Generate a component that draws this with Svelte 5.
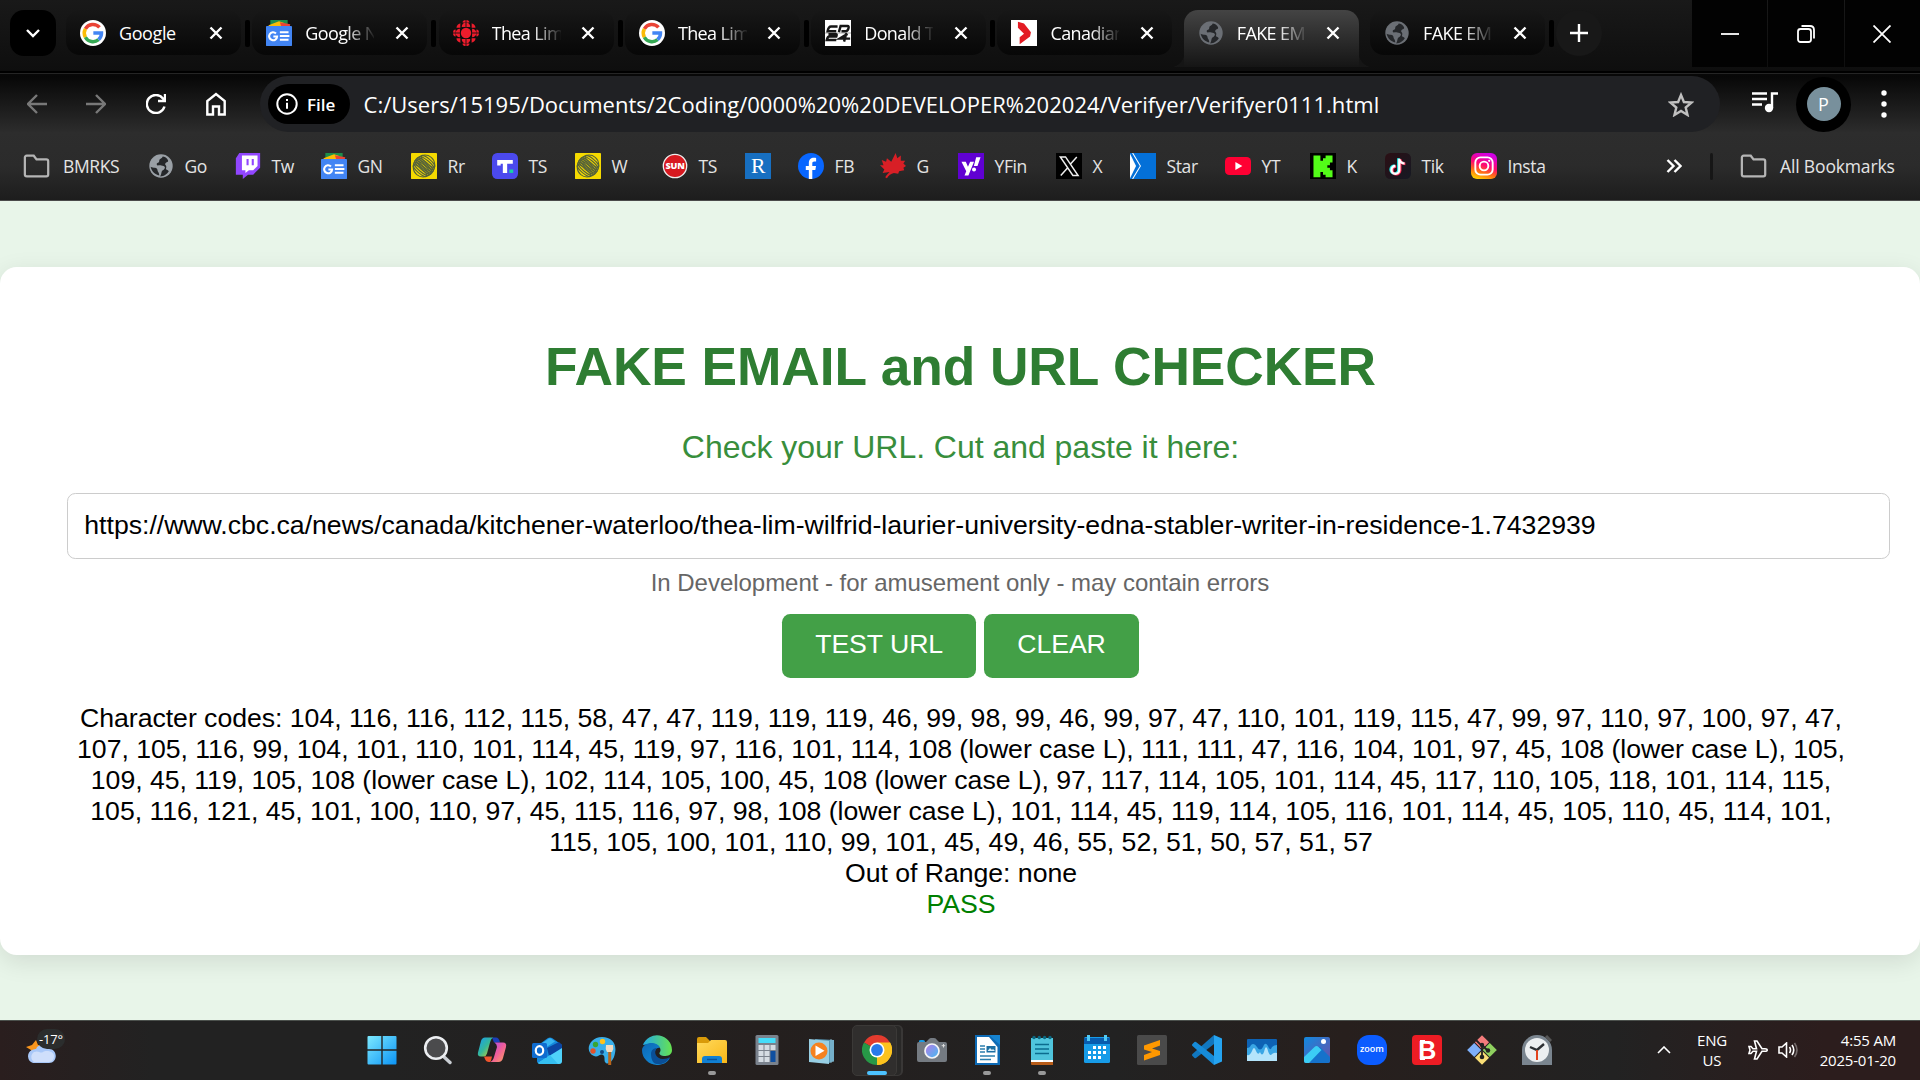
<script>
  const googleG = '<circle cx="15" cy="15" r="15" fill="#fff"/><path d="M22.5 8.6A10 10 0 0 0 6.2 10.2" fill="none" stroke="#ea4335" stroke-width="4"/><path d="M6.2 10.2A10 10 0 0 0 6.2 19.9" fill="none" stroke="#fbbc05" stroke-width="4"/><path d="M6.2 19.9A10 10 0 0 0 21.4 22.7" fill="none" stroke="#34a853" stroke-width="4"/><path d="M21.4 22.7A10 10 0 0 0 24.8 15H15.4" fill="none" stroke="#4285f4" stroke-width="4"/>';
  const gnews = '<path d="M5 0h20v9H5z" fill="#1e8e4a"/><path d="M3 6 15 1.500l6 2V8H3z" fill="#fbbc05"/><path d="M16 2.500l12 2.500-1 4H18z" fill="#ea4335"/><rect y="7" width="30" height="23" rx="1" fill="#4285f4"/><path d="M11.500 15.600A4.600 4.600 0 1 0 12.800 19H8.500" fill="none" stroke="#fff" stroke-width="2.400"/><path d="M16 14.200h10M16 18.500h11M16 22.800h10" stroke="#fff" stroke-width="2.400"/>';
  const globe = (c) => `<circle cx="15" cy="15" r="13.5" fill="${c}"/><path d="M17 4c-1 3-4 2-4 5s-3 2-3 4 5 1 8 2 1 4-1 5-1 4-3 7c5 0 8-3 10-6-1-2-4-1-3-4s-2-3-1-5 4-1 3-4c-2-3-4-4-6-4zM3 16c3 2 8 0 8 4 0 2 2 2 2 6-5-1-9-5-10-10z" fill="#25272a"/>`;
  const rogers = '<rect width="30" height="30" rx="1" fill="#f5da00"/><g fill="none" stroke="#56633a" stroke-width="1.250"><g transform="rotate(-50 15 15)"><ellipse cx="15" cy="15" rx="13" ry="12"/><ellipse cx="13" cy="15" rx="3" ry="12"/><ellipse cx="15" cy="15" rx="3" ry="12"/><ellipse cx="17" cy="15" rx="3" ry="12"/><ellipse cx="19.500" cy="15" rx="3" ry="11"/><ellipse cx="22" cy="15" rx="3" ry="10"/><ellipse cx="10.500" cy="15" rx="3" ry="11"/><ellipse cx="8" cy="15" rx="3" ry="10"/></g></g>';
  const icons = {
    google: googleG,
    gnews,
    globe: globe('#9aa0a6'),
    globeDim: globe('#6b6f75'),
    rogers,
    cbc: '<g fill="#ed1c2c"><path d="M10 8a5 5 0 0 1 10 0zM10 22a5 5 0 0 0 10 0zM8 10a5 5 0 0 0 0 10zM22 10a5 5 0 0 1 0 10z"/><path d="M11 3a4 3 0 0 1 8 0zM11 27a4 3 0 0 0 8 0zM3 11a3 4 0 0 0 0 8zM27 11a3 4 0 0 1 0 8z"/><path d="M4 9a5 5 0 0 1 5-5v5zM26 9a5 5 0 0 0-5-5v5zM4 21a5 5 0 0 0 5 5v-5zM26 21a5 5 0 0 1-5 5v-5z"/></g><path d="M15 0v30M0 15h30M9 4v22M21 4v22" stroke="#111" stroke-width="1"/><circle cx="15" cy="15" r="6" fill="#ed1c2c"/>',
    cp24: '<rect width="30" height="30" fill="#fff"/><path d="M0 15h30" stroke="#999" stroke-width="1"/><g fill="none" stroke="#161616" stroke-width="2.800"><path d="M14.500 7.500H7q-3 0-4 5.500h10M16 14l2-7h8q2 0 1 3t-3 3h-5M4 16.500h9q1 0 0 2.500H5q-2 0-3 4h11M26 16l-9 5.500H29M24.500 15.500 22 25"/></g>',
    ctv: '<rect width="30" height="30" fill="#fff"/><path d="M8 2l7 2 8 10-1 5L10 28V20l5-4L8 9z" fill="#e31b23"/>',
    folder: '<path d="M2 8V24q0 2 2 2H25q2 0 2-2V10q0-2-2-2H14.500L11.500 4H4Q2 4 2 6z" fill="none" stroke="#b5b5b5" stroke-width="2.400"/>',
    twitch: '<path d="M5 0H29V17l-8 8h-6l-6 5v-5H1V6z" fill="#9146ff"/><path d="M8 3H26V15l-5 5h-5l-4 3v-3H8z" fill="#fff"/><path d="M14.500 7v7M20.500 7v7" stroke="#9146ff" stroke-width="2.400"/>',
    ts: '<rect width="30" height="30" rx="6" fill="#4b49ee"/><path d="M6 8H24v4.500H17.500v10.500H12.500V12.500H10v2H6z" fill="#fff"/><rect x="20" y="19" width="4.500" height="4" fill="#18d1a5"/>',
    sun: '<circle cx="15" cy="15" r="13.500" fill="#d71920" stroke="#eee" stroke-width="1.500"/><text x="15" y="18.800" font-family="Open Sans, sans-serif" font-size="10.500" font-weight="800" text-anchor="middle" letter-spacing="-.3" fill="#fff">SUN</text>',
    r: '<rect width="30" height="30" fill="#176fc1"/><text x="15" y="23.500" font-family="Liberation Serif, serif" font-size="25" text-anchor="middle" fill="#fff">R</text>',
    fb: '<circle cx="15" cy="15" r="15" fill="#0866ff"/><path d="M12.500 30V19.500H9V15h3.500v-2.800C12.500 7 15 5.500 18.300 5.500c1 0 2 .2 2.600.3v3.900h-2c-2 0-2.400 1-2.400 2.500V15h4.300l-.8 4.500h-3.500V30z" fill="#fff"/>',
    leaf: '<path d="M18 0l2 6 4-3v6l5 0-2 3 3 3-3 2 1 3-6 1-1 3-5-1q-5 1-8 6l-2-1q2-3 5-6l-8 1 2-4-5-5 4 0-2-6 5 2 1-4 5 4z" fill="#d81f26"/>',
    yahoo: '<rect width="30" height="30" fill="#6001d2"/><path d="M4 10h5l2.500 6 2.500-6h4.500L12 26H7.500l2-4.800zM21 5h5l-3.500 10h-4.200z" fill="#fff"/><circle cx="18.500" cy="19" r="2.300" fill="#fff"/>',
    x: '<rect width="30" height="30" fill="#000"/><path d="M5 4.500h6L25.500 26h-6zM24 4.500 16.500 13M13 17.500 5.500 26" fill="none" stroke="#eee" stroke-width="1.700"/>',
    star: '<rect width="30" height="30" fill="#0470d8"/><path d="M0 1l7 14-7 14z" fill="#fff"/><path d="M3 0l9 15-9 15" fill="none" stroke="#fff" stroke-width="1.200"/>',
    yt: '<rect y="4.500" width="30" height="21" rx="5" fill="#ff0033"/><path d="M12 10.500v9l8-4.500z" fill="#fff"/>',
    kick: '<rect width="30" height="30" fill="#000"/><path d="M4 3h8v6h3V6h3V3h8v8h-3v3h-3v3h3v3h3v8h-8v-3h-3v-3h-3v6H4z" fill="#53fc18"/>',
    tiktok: '<defs><linearGradient id="tk" y2="1"><stop stop-color="#2b0f14"/><stop offset="1" stop-color="#151923"/></linearGradient></defs><rect width="30" height="30" rx="6" fill="url(#tk)"/><g fill="none" stroke-width="3"><path d="M15.500 6v13a4.500 4.500 0 1 1-4.500-4.500M15.500 7c1 3 3 4.500 6 4.500" stroke="#25f4ee"/><path d="M17.500 7v13a4.500 4.500 0 1 1-4.500-4.500M17.500 8c1 3 3 4.500 6 4.500" stroke="#fe2c55"/><path d="M16.500 6.500v13a4.500 4.500 0 1 1-4.500-4.500M16.500 7.500c1 3 3 4.500 6 4.500" stroke="#fff" stroke-width="2.600"/></g>',
    insta: '<defs><linearGradient id="ig" x1=".25" y1="1" x2=".6" y2="0"><stop stop-color="#ffd000"/><stop offset=".3" stop-color="#ff6a18"/><stop offset=".55" stop-color="#ff0a70"/><stop offset="1" stop-color="#d000e8"/></linearGradient></defs><rect width="30" height="30" rx="7" fill="url(#ig)"/><rect x="5" y="5" width="20" height="20" rx="6" fill="none" stroke="#fff" stroke-width="2.200"/><circle cx="15" cy="15" r="5" fill="none" stroke="#fff" stroke-width="2.200"/><circle cx="21" cy="9" r="1.300" fill="#fff"/>',

    win: '<defs><linearGradient id="wn" x2="1" y2="1"><stop stop-color="#7deaff"/><stop offset="1" stop-color="#0b93f5"/></linearGradient></defs><path d="M.5 2q0-1 1-1H14.300V14.300H.500zM15.700 1H28.500q1 0 1 1V14.300H15.700zM.500 15.700H14.300V29.500H1.500q-1 0-1-1zM15.700 15.700H29.500V28.500q0 1-1 1H15.700z" fill="url(#wn)"/>',
    search: '<path d="M21 21l7 6.500" stroke="#c9cdd3" stroke-width="3.400" stroke-linecap="round"/><circle cx="14" cy="13" r="10.800" fill="#4b4b4d" stroke="#eceef1" stroke-width="2.600"/>',
    copilot: '<defs><linearGradient id="cp1" y2="1"><stop stop-color="#169cf5"/><stop offset=".5" stop-color="#35b79a"/><stop offset="1" stop-color="#e9d31c"/></linearGradient><linearGradient id="cp2" y2="1"><stop stop-color="#a64cf0"/><stop offset=".5" stop-color="#ef5d9b"/><stop offset="1" stop-color="#ffa35c"/></linearGradient></defs><path d="M15 2.500h4q3 0 4 5h-6z" fill="#1b3fb9"/><path d="M8 2.500h8q-2 1-3 5l-3 11q-1 3-3 3H4q-4 0-3-4L4 6q1-3.500 4-3.500z" fill="url(#cp1)"/><path d="M17.500 7.500H26q4 0 3 4.500l-3 11q-1 4-4.500 4H13q3-1 4-5l3-10q0-3-2.500-4.500z" fill="url(#cp2)"/><path d="M7 21.500h8q-1 5-2 5.500h-1q-3 0-4-3z" fill="#f0552e"/>',
    outlook: '<path d="M5 11 16 3q2-1 4 0l10 7v15q0 4-4 4H9q-4 0-4-3z" fill="#1489dc"/><path d="M6 11 17 3.500q1-.500 2 0l4 3L10 15z" fill="#37b5f2"/><path d="M15 13 27 7l3 3v4L17 21z" fill="#0b45a3"/><path d="M30 13v13q0 3-3 3H9q-2 0-3-1z" fill="#4fd2fa"/><path d="M6 28l9-6 3-2 8 9H9q-2 0-3-1z" fill="#35bff1"/><rect y="8" width="15" height="15" rx="1.500" fill="#0f6cd0"/><ellipse cx="7.500" cy="15.500" rx="3.700" ry="4.300" fill="none" stroke="#fff" stroke-width="2.200"/>',
    paint: '<path d="M15 2C25 2 30 9 28 18c-1 8-7 12-9 10-3-2 0-6-3-8s-5 3-9 1C-3 17 2 2 15 2z" fill="#38aee9"/><circle cx="6" cy="16" r="2.700" fill="#e0512b"/><circle cx="8.500" cy="9.500" r="2.700" fill="#38a535"/><circle cx="15.500" cy="6.500" r="2.700" fill="#ffc21a"/><circle cx="15" cy="17" r="2" fill="#124a83"/><path d="M21.200 16h3v14h-3z" fill="#b9651b"/><path d="M19 10h7q1 4-1 7h-5q-2-3-1-7z" fill="#f1dcc2"/>',
    edge: '<defs><linearGradient id="ed1" x2="1"><stop stop-color="#22a9e8"/><stop offset="1" stop-color="#67e34f"/></linearGradient><linearGradient id="ed2" y2="1"><stop stop-color="#0c67b5"/><stop offset="1" stop-color="#1593df"/></linearGradient></defs><path d="M1 10A15 15 0 0 1 30 15c0 5-4 6-8 6-3 0-6-2-4-4 2-4-2-8-8-8-4 0-7 1-9 1z" fill="url(#ed1)"/><path d="M0 15C1 6 16 6 18 13c-4-1-7 4-4 9s9 5 14 1c-3 5-8 7-13 7A15 15 0 0 1 0 15z" fill="url(#ed2)"/><path d="M9 19c0-4 3-6 6-6-4 4-1 11 6 11 3 0 5-1 7-2-3 6-9 8-13 7-4 0-6-5-6-10z" fill="#0a4f97"/>',
    files: '<defs><linearGradient id="fl" y2="1"><stop stop-color="#ffd95c"/><stop offset="1" stop-color="#f9b717"/></linearGradient></defs><path d="M0 8V4q0-2 2-2h7l4 4v6H0z" fill="#d99a09"/><path d="M0 8H11l3-3H28q2 0 2 2V28H0z" fill="url(#fl)"/><path d="M5 28V24q0-3 3-3H22q3 0 3 3v4z" fill="#1180d3"/><path d="M10 24.500H20" stroke="#08539c" stroke-width="1.400"/>',
    calc: '<rect x="3.500" width="23" height="30" rx="1.500" fill="#7a828d"/><rect x="6.500" y="3" width="17" height="5" fill="#45ddfa"/><g fill="#d5dce3"><path d="M6.500 10h5v5h-5zM12.500 10h5v5h-5zM18.500 10h5v5h-5zM6.500 16h5v5h-5zM12.500 16h5v5h-5zM6.500 22h5v5h-5zM12.500 22h5v5h-5z"/></g><path d="M18.500 16h5v11h-5z" fill="#0f4fa0"/>',
    media: '<path d="M8 4l19 1v21l-5 2-8-1z" fill="#5a9ab8"/><path d="M24 4v24M26 5v22" stroke="#9ed2e6" stroke-width=".8"/><path d="M2 4l20 2v23L2 27z" fill="#98cfe4"/><circle cx="12" cy="16" r="8.500" fill="#f58220"/><path d="M8.500 10.500v10.500l9-5.250z" fill="#fff"/>',
    chrome: '<path d="M15 15 2 7.500A15 15 0 0 1 28 7.500z" fill="#e33b2e"/><path d="M15 15 28 7.500A15 15 0 0 1 15 30z" fill="#fcc31e"/><path d="M15 15 15 30A15 15 0 0 1 2 7.500z" fill="#279847"/><path d="M15 7.500H28A15 15 0 0 1 15 30l6.500-11z" fill="#fcc31e"/><circle cx="15" cy="15" r="7.500" fill="#fff"/><circle cx="15" cy="15" r="5.900" fill="#2979ea"/>',
    camera: '<defs><linearGradient id="cm" x2="1" y2="1"><stop stop-color="#ba79e8"/><stop offset="1" stop-color="#3fbdf0"/></linearGradient></defs><path d="M2 8V6q0-1 2-1h2q2 0 2 2v2z" fill="#199be4"/><path d="M0 9q0-2 2-2h7l3-3q1-1 2-1h3q2 0 3 2l2 2h6q2 0 2 2v16q0 2-2 2H2q-2 0-2-2z" fill="#757b82"/><circle cx="15" cy="16" r="7" fill="url(#cm)" stroke="#f4f4f6" stroke-width="1.700"/><path d="M26.500 9v3.500M24.700 10.700h3.500" stroke="#ddd" stroke-width="1"/>',
    writer: '<path d="M3 0H20l8 8V30H3z" fill="#0d6ab5"/><path d="M5 2H17L25.500 12V28H5z" fill="#fff"/><path d="M17 0H28V10z" fill="#1683d0"/><path d="M8 11h5M8 14h5M8 17h5M8 21h15M8 24.500h11" stroke="#2b7fae" stroke-width="1.500"/><path d="M14.500 11h9v6.500h-9z" fill="#1c6fa3"/><path d="M15.500 16l2.500-3 2 2 1-1 2 2z" fill="#d9edf8"/>',
    notepad: '<path d="M4 26H26v4H5q-1 0-1-1z" fill="#b85c18"/><path d="M4 25H26v2H4z" fill="#fff"/><path d="M4 3H26V25H4z" fill="#4fc4dc"/><path d="M8 9.500H22M8 14H22M8 18.500H22" stroke="#0b6c8e" stroke-width="1.700"/><g fill="#0b667f"><circle cx="7" cy="2.500" r="1.700"/><circle cx="12.300" cy="2.500" r="1.700"/><circle cx="17.600" cy="2.500" r="1.700"/><circle cx="23" cy="2.500" r="1.700"/></g>',
    calendar: '<rect x="2" y="2" width="26" height="26" rx="1.500" fill="#179ce8"/><path d="M2 3h26v6H2z" fill="#075cae"/><path d="M5 0h3v6H5zM22 0h3v6h-3z" fill="#50c9f4"/><g fill="#fff"><path d="M11 11h3v3h-3zM16 11h3v3h-3zM21 11h3v3h-3zM6 16h3v3H6zM11 16h3v3h-3zM16 16h3v3h-3zM21 16h3v3h-3zM6 21h3v3H6zM11 21h3v3h-3zM16 21h3v3h-3z"/></g>',
    sublime: '<rect width="30" height="30" rx="1.500" fill="#4a4a4a"/><path d="M7 10.500 23 5v5.500L15 13.500 23 16v4L7 25.500V20l8-3-8-2.500z" fill="#ff9800"/>',
    vscode: '<path d="M22 0l8 3.500V26.500L22 30z" fill="#25a4f1"/><path d="M22 0v9L4 23q-1 .500-1.500 0L.500 21q-1-1 0-2z" fill="#1177bf"/><path d="M22 30v-9L4 7q-1-.500-1.500 0L.500 9q-1 1 0 2z" fill="#168bd8"/>',
    perf: '<rect y="4" width="30" height="22" rx="1" fill="#0d62b4"/><path d="M0 13q3 0 4-3 3-3 6 2t6 0q2-6 5-1 2 6 4 1 2-2 5-2V26H0z" fill="#3aa6e5"/><path d="M0 20q3 1 5-4 2-6 4 0 2 5 4 1 2 5 4 0 2-9 4-1 2 6 4 3 3-2 5-1V26H0z" fill="#b4e4fb"/>',
    photos: '<defs><linearGradient id="ph" x2="1" y2="1"><stop stop-color="#118ae0"/><stop offset="1" stop-color="#6c4fa8"/></linearGradient></defs><rect x="2" y="2" width="26" height="26" rx="2" fill="url(#ph)"/><path d="M8 28 15 13q2-2 4 0l9 9v4q0 2-2 2z" fill="#1572cb"/><path d="M2 22 12.500 12q2-2 4 0l3 3L7 28H4q-2 0-2-2z" fill="#3bcdf5"/><circle cx="21.500" cy="6.500" r="2.500" fill="#fff"/>',
    zoom: '<rect width="30" height="30" rx="12" fill="#0b5cff"/><text x="15" y="17.300" font-family="Open Sans, sans-serif" font-size="9" font-weight="600" text-anchor="middle" fill="#fff">zoom</text>',
    bit: '<rect width="30" height="30" rx="4" fill="#ed1c24"/><text x="15.200" y="24" font-family="Liberation Sans, sans-serif" font-size="25" font-weight="700" text-anchor="middle" fill="#fff">B</text><path d="M8 6.200h5M8 24h5" stroke="#fff" stroke-width="2.200"/>',
    git: '<g transform="rotate(45 15 15)"><path d="M4.500 4.500H14.500V14.500H4.500z" fill="#f47c7c"/><path d="M15.500 4.500H25.500V14.500H15.500z" fill="#8fd05f"/><path d="M15.500 15.500H25.500V25.500H15.500z" fill="#f9de76"/><path d="M4.500 15.500H14.500V25.500H4.500z" fill="#7eb0fa"/></g><path d="M9 5l6 6v11M15 10l6 6" stroke="#222" stroke-width="1.800"/><g fill="#222"><circle cx="15" cy="10" r="2.200"/><circle cx="15" cy="22" r="2.300"/><circle cx="21" cy="15.500" r="2.200"/></g>',
    clock: '<path d="M0 30V15A15 15 0 0 1 30 15V30z" fill="#7a858f"/><path d="M24 1l5 5" stroke="#555" stroke-width="3"/><circle cx="15" cy="15" r="12" fill="#eceff1"/><path d="M8 12l7 3 7-6" fill="none" stroke="#2c2f33" stroke-width="2.400"/><path d="M15 15v10" stroke="#e2431e" stroke-width="2"/>'
  };

  const tabs = [
    { icon: 'google', title: 'Google' },
    { icon: 'gnews', title: 'Google N', fade: true },
    { icon: 'cbc', title: 'Thea Lim', fade: true },
    { icon: 'google', title: 'Thea Lim', fade: true },
    { icon: 'cp24', title: 'Donald T', fade: true },
    { icon: 'ctv', title: 'Canadian', fade: true },
    { icon: 'globeDim', title: 'FAKE EM', fade: true, active: true },
    { icon: 'globeDim', title: 'FAKE EM', fade: true }
  ];

  const bookmarks = [
    ['folder', 'BMRKS'], ['globe', 'Go'], ['twitch', 'Tw'], ['gnews', 'GN'], ['rogers', 'Rr'], ['ts', 'TS'],
    ['rogers', 'W'], ['sun', 'TS'], ['r', ''], ['fb', 'FB'], ['leaf', 'G'], ['yahoo', 'YFin'], ['x', 'X'],
    ['star', 'Star'], ['yt', 'YT'], ['kick', 'K'], ['tiktok', 'Tik'], ['insta', 'Insta']
  ];

  const apps = [
    ['win'], ['search'], ['copilot'], ['outlook'], ['paint'], ['edge'], ['files', 'open'], ['calc'], ['media'],
    ['chrome', 'current'], ['camera'], ['writer', 'open'], ['notepad', 'open'], ['calendar'], ['sublime'],
    ['vscode'], ['perf'], ['photos'], ['zoom'], ['bit'], ['git'], ['clock']
  ];

  const url = 'https://www.cbc.ca/news/canada/kitchener-waterloo/thea-lim-wilfrid-laurier-university-edna-stabler-writer-in-residence-1.7432939';
  const codes = Array.from(url, (ch) => (ch === 'l' ? '108 (lower case L)' : String(ch.charCodeAt(0)))).join(', ');
</script>

{#snippet icon(name)}
  <svg class="icon" viewBox="0 0 30 30">{@html icons[name]}</svg>
{/snippet}

<div class="screen">
  <div class="tabstrip">
    <div class="tabsearch">
      <svg width="16" height="10" viewBox="0 0 16 10"><path d="M2 2l6 6 6-6" /></svg>
    </div>
    <div class="tabs">
      {#each tabs as tab}
        <div class="tab" class:active={tab.active}>
          {@render icon(tab.icon)}
          <span class="tabtitle" class:fade={tab.fade}>{tab.title}</span>
          <svg class="close" width="14" height="14" viewBox="0 0 14 14"><path d="M1.500 1.500l11 11M12.500 1.500l-11 11" /></svg>
        </div>
      {/each}
    </div>
    <div class="newtab"><svg width="18" height="18" viewBox="0 0 18 18"><path d="M9 0v18M0 9h18" /></svg></div>
    <div class="winbtns">
      <div><svg width="18" height="18" viewBox="0 0 18 18"><path d="M0 9h18" /></svg></div>
      <div><svg width="18" height="18" viewBox="0 0 18 18"><rect x="1" y="4" width="13" height="13" rx="2.500" /><path d="M4.500 1H13q4 0 4 4v8.500" /></svg></div>
      <div><svg width="18" height="18" viewBox="0 0 18 18"><path d="M.500.500l17 17M17.500.500l-17 17" /></svg></div>
    </div>
  </div>
  <div class="divider"></div>

  <div class="toolbar">
    <div class="nav">
      <svg class="dim" width="20" height="20" viewBox="0 0 20 20"><path d="M20 10H1.500M10 1l-9 9 9 9" /></svg>
      <svg class="dim" width="20" height="20" viewBox="0 0 20 20"><path d="M0 10h18.500M10 1l9 9-9 9" /></svg>
      <svg width="20" height="20" viewBox="0 0 20 20"><path d="M18.500 12.500A9 9 0 1 1 17 4.500l1.500 2M19 0v7h-7" /></svg>
      <svg width="20" height="24" viewBox="0 0 20 24"><path d="M1.300 22.500V9L10 2l8.700 7v13.500h-5.700v-8H7v8z" /></svg>
    </div>
    <div class="omnibox">
      <div class="chip">
        <svg width="22" height="22" viewBox="0 0 22 22"><circle cx="11" cy="11" r="9.700" /><path d="M11 9.800v6M11 6v2" /></svg>
        <b>File</b>
      </div>
      <span class="address">C:/Users/15195/Documents/2Coding/0000%20%20DEVELOPER%202024/Verifyer/Verifyer0111.html</span>
      <svg class="fav" width="26" height="25" viewBox="0 0 26 25"><path d="M13 3l2.900 7 7.600.600-5.800 4.900 1.800 7.400L13 18.900l-6.500 4 1.800-7.400-5.800-4.900 7.600-.600z" /></svg>
    </div>
    <svg class="media" width="26" height="22" viewBox="0 0 26 22"><path d="M0 2.500h15M0 8h15M0 13.500h10M20 17V2.500h6" /><circle cx="17" cy="17" r="4.200" /></svg>
    <div class="profile"><span>P</span></div>
    <svg class="kebab" width="6" height="28" viewBox="0 0 6 28"><circle cx="3" cy="3" r="2.700" /><circle cx="3" cy="14" r="2.700" /><circle cx="3" cy="25" r="2.700" /></svg>
  </div>

  <div class="bookmarks">
    <div class="marks">
      {#each bookmarks as [name, label]}
        <div class="mark">{@render icon(name)}<span>{label}</span></div>
      {/each}
    </div>
    <svg class="more" width="16" height="14" viewBox="0 0 16 14"><path d="M1.500 1l6 6-6 6M8.500 1l6 6-6 6" /></svg>
    <i class="sep"></i>
    <div class="mark all">{@render icon('folder')}<span>All Bookmarks</span></div>
  </div>

  <main class="page">
    <section class="card">
      <h1>FAKE EMAIL and URL CHECKER</h1>
      <p class="lead">Check your URL. Cut and paste it here:</p>
      <div class="field">{url}</div>
      <p class="note">In Development - for amusement only - may contain errors</p>
      <div class="actions"><button>TEST URL</button><button>CLEAR</button></div>
      <div class="result">
        <div>Character codes: {codes}</div>
        <div>Out of Range: none</div>
        <div class="pass">PASS</div>
      </div>
    </section>
  </main>

  <footer class="taskbar">
    <div class="weather">
      <svg width="30" height="24" viewBox="0 0 30 24">
        <path d="M10 0l2 5 6 0-3 8-9 2-1-5-5-3 6-2z" fill="#f9951d" />
        <path d="M7 23a7 7 0 0 1-1-13c2-1 3-1 4-1 2-6 12-6 13 0 9 0 9 14 0 14z" fill="#a9c8f8" />
        <path d="M8 22a6 6 0 0 1 0-10c5-2 6 2 9 0s11-1 11 4-3 6-6 6z" fill="#cfdffb" />
      </svg>
      <span>-17°</span>
    </div>
    <div class="apps">
      {#each apps as [name, state]}
        <div class="app {state ?? ''}">{@render icon(name)}</div>
      {/each}
    </div>
    <div class="tray">
      <svg class="up" width="14" height="8" viewBox="0 0 14 8"><path d="M1 7l6-6 6 6" /></svg>
      <div class="lang"><span>ENG</span><span>US</span></div>
      <svg class="plane" width="20" height="20" viewBox="0 0 20 20"><path d="M1 6.500h2l2 2.200h3.500L6.500 1H9l5 7.700h3q2.200 0 2.200 1.300T17 11.300h-3L9 19H6.500l2-7.700H5L3 13.500H1L2 10z" /></svg>
      <svg class="vol" width="20" height="16" viewBox="0 0 20 16"><path d="M1 5h3l4.500-4v14L4 11H1zM11.500 5q2 3 0 6M14 3q3.500 5 0 10" /><path d="M16.500 1q5 7 0 14" opacity=".35" /></svg>
      <div class="time"><span>4:55 AM</span><span>2025-01-20</span></div>
    </div>
  </footer>
</div>

<style>
  :global(body) { margin: 0; overflow: hidden; }
  .screen {
    width: 1920px; height: 1080px; display: flex; flex-direction: column; overflow: hidden;
    font-family: "Open Sans", "Noto Sans", sans-serif; color: #fff; background: #e8f5e9;
  }
  svg { flex: none; fill: none; stroke: #fff; stroke-width: 2.4; }
  .icon { width: 26px; height: 26px; stroke: none; display: block; }

  .tabstrip { height: 71px; display: flex; align-items: flex-start; background: linear-gradient(#191919, #0e0e0e); flex: none; }
  .tabsearch { width: 46px; height: 46px; margin: 10px 0 0 10px; border-radius: 14px; background: #000; display: grid; place-items: center; }
  .tabs { display: flex; margin-left: 10px; }
  .tab {
    position: relative; box-sizing: border-box; width: 175px; height: 45px; margin: 10px 11.300px 0 0; padding: 0 0 0 14px;
    display: flex; align-items: center; border-radius: 14px; background: linear-gradient(#171717, #070707);
  }
  .tab::after { content: ""; position: absolute; right: -9px; top: 10px; width: 5px; height: 27px; border-radius: 2px; background: #000; }
  .tab:nth-child(6)::after { display: none; }
  .tab.active { height: 57px; padding-bottom: 12px; border-radius: 14px 14px 0 0; background: linear-gradient(#444, #151515); }
  .tab.active::before, .tab.active::after { content: ""; position: absolute; top: auto; bottom: 0; width: 14px; height: 14px; border-radius: 0; }
  .tab.active::before { left: -14px; background: radial-gradient(circle at 0 0, transparent 14px, #151515 14.500px); }
  .tab.active::after { right: -14px; background: radial-gradient(circle at 100% 0, transparent 14px, #151515 14.500px); }
  .tabtitle { margin-left: 13px; width: 69px; font-size: 18px; letter-spacing: -.4px; white-space: nowrap; }
  .fade {
    letter-spacing: -.62px;
    -webkit-mask-image: linear-gradient(90deg, #000 58%, transparent 103%); mask-image: linear-gradient(90deg, #000 58%, transparent 103%);
  }
  .close { margin-left: 20.500px; }
  .newtab { width: 46px; height: 46px; border-radius: 50%; margin: 10px 0 0 -.5px; background: #181818; display: grid; place-items: center; }
  .winbtns { margin-left: auto; display: flex; gap: 1px; }
  .winbtns div { width: 75.400px; height: 67px; background: #020202; display: grid; place-items: center; }
  .winbtns svg { stroke-width: 1.8; }
  .divider { height: 5px; flex: none; background: linear-gradient(#000 0 40%, #252525 40% 60%, #080808 60%); }

  .toolbar { height: 56px; flex: none; display: flex; align-items: center; background: linear-gradient(#070707, #2c2c2c); }
  .nav { width: 260px; box-sizing: border-box; padding-left: 26.500px; display: flex; align-items: center; gap: 39.800px; }
  .dim { stroke: #787878; }
  .omnibox { width: 1460px; height: 56px; box-sizing: border-box; padding: 0 26px 0 8px; border-radius: 28px; background: #202124; display: flex; align-items: center; }
  .chip { width: 82px; height: 40px; border-radius: 20px; background: #000; display: flex; align-items: center; gap: 9px; padding-left: 8px; box-sizing: border-box; font-size: 17px; }
  .chip svg { stroke-width: 2; }
  .chip b { font-weight: 600; }
  .address { margin-left: 13.500px; font-size: 22px; letter-spacing: .02px; white-space: nowrap; }
  .fav { margin-left: auto; stroke: #c0c0c0; }
  .media { margin-left: 32px; margin-top: -4px; }
  .media circle { fill: #fff; stroke: none; }
  .profile { width: 55px; height: 55px; margin-left: 18px; border-radius: 50%; background: #000; display: grid; place-items: center; }
  .profile span { width: 34px; height: 42px; height: 34px; border-radius: 50%; background: #78909c; font-size: 18px; line-height: 34px; text-align: center; }
  .kebab { margin-left: 29.500px; fill: #fff; stroke: none; }

  .bookmarks { height: 69px; box-sizing: border-box; flex: none; display: flex; align-items: center; border-bottom: 1px solid #4a4a4a; background: linear-gradient(#2d2d2d, #2b2b2b 50%, #1d1d1d); font-size: 17.500px; letter-spacing: -.38px; color: #e4e4e4; }
  .marks { width: 1643px; box-sizing: border-box; padding-left: 23px; display: grid; grid-template-columns: 125px 87px 86px 90px 81px 83px 87px 83px 53px 82px 78px 98px 74px 95px 85px 75px 86px 80px; }
  .mark { display: flex; align-items: center; gap: 10.500px; white-space: nowrap; }
  .mark:first-child, .all { gap: 12px; }
  .all { letter-spacing: -.15px; }
  .mark:first-child .icon, .all .icon { width: 28px; height: 28px; }
  .more { margin-left: 23px; }
  .sep { width: 3px; height: 27px; border-radius: 2px; background: #161616; margin: 0 27px 0 28px; }

  .page { flex: 1; box-sizing: border-box; padding-top: 66px; font-family: "Liberation Sans", Arial, sans-serif; color: #000; }
  .card { height: 688px; box-sizing: border-box; padding: 66.670px; border-radius: 16.670px; background: #fff; box-shadow: 0 6.670px 25px rgba(0, 0, 0, .1); text-align: center; }
  h1 { margin: 0; height: 66px; line-height: 66px; font-size: 53.330px; letter-spacing: -.1px; text-indent: 1px; color: #2e7d32; }
  .lead { margin: 28px 0 0; height: 38px; line-height: 38px; font-size: 32px; letter-spacing: -.03px; text-indent: 1px; color: #388e3c; }
  .field { margin-top: 27px; width: 1823.300px; height: 66px; line-height: 62px; box-sizing: border-box; padding-left: 16.670px; border: 1px solid #ccc; border-radius: 8.330px; text-align: left; font-size: 26.670px; letter-spacing: -.022px; white-space: nowrap; }
  .note { margin: 10px 0 0; height: 28px; line-height: 28px; font-size: 24px; letter-spacing: -.03px; color: #666; }
  .actions { margin-top: 17px; padding-left: 1px; display: flex; justify-content: center; gap: 7.400px; }
  button { height: 64px; padding: 0 33.330px 3px; border: 0; border-radius: 8.330px; background: #43a047; color: #fff; font: 26.670px "Liberation Sans", Arial, sans-serif; letter-spacing: -.05px; }
  .result { margin: 25px -1px 0 1px; font-size: 26.670px; line-height: 31px; letter-spacing: -.033px; }
  .pass { color: #008000; }

  .taskbar { height: 60px; box-sizing: border-box; flex: none; display: flex; align-items: stretch; border-top: 1px solid #4b504c; background: linear-gradient(90deg, #2a1e1e, #222 8%, #222 20%, #241f1e 40%, #222 58%, #271f1d 70%, #222 84%, #2c1d1d 95%); }
  .weather { position: relative; width: 366.500px; }
  .weather svg { position: absolute; left: 26px; top: 19px; stroke: none; }
  .weather span { position: absolute; left: 37px; top: 8px; width: 28px; height: 20px; border-radius: 10px; background: #2b2d2d; text-align: center; font-size: 13px; line-height: 20px; letter-spacing: -.2px; }
  .apps { display: flex; gap: 25.050px; }
  .app { position: relative; width: 30px; display: flex; align-items: center; }
  .app .icon { position: relative; top: -1px; width: 30px; height: 30px; }
  .app.open::after { content: ""; position: absolute; left: 11px; bottom: 5px; width: 8px; height: 4px; border-radius: 2px; background: #999; }
  .app.current::before { content: ""; position: absolute; left: -10px; top: 4px; width: 43px; height: 49px; border: 1px solid #3b3937; border-radius: 5px; background: #302e2d; box-shadow: 5px 0 0 -1px #292827, 6px 0 0 #393736; }
  .app.current::after { content: ""; position: absolute; left: 5px; bottom: 5px; width: 20px; height: 4px; border-radius: 2px; background: #4cc2ff; }
  .tray { margin-left: auto; padding-right: 24px; padding-bottom: 1px; display: flex; align-items: center; font-size: 15px; line-height: 20px; letter-spacing: -.2px; }
  .tray svg { stroke-width: 1.6; }
  .lang { width: 32px; margin-left: 25px; display: flex; flex-direction: column; align-items: center; }
  .plane { margin-left: 20px; }
  .vol { margin-left: 10px; }
  .time { width: 81px; margin-left: 17px; display: flex; flex-direction: column; align-items: flex-end; white-space: nowrap; }
</style>
